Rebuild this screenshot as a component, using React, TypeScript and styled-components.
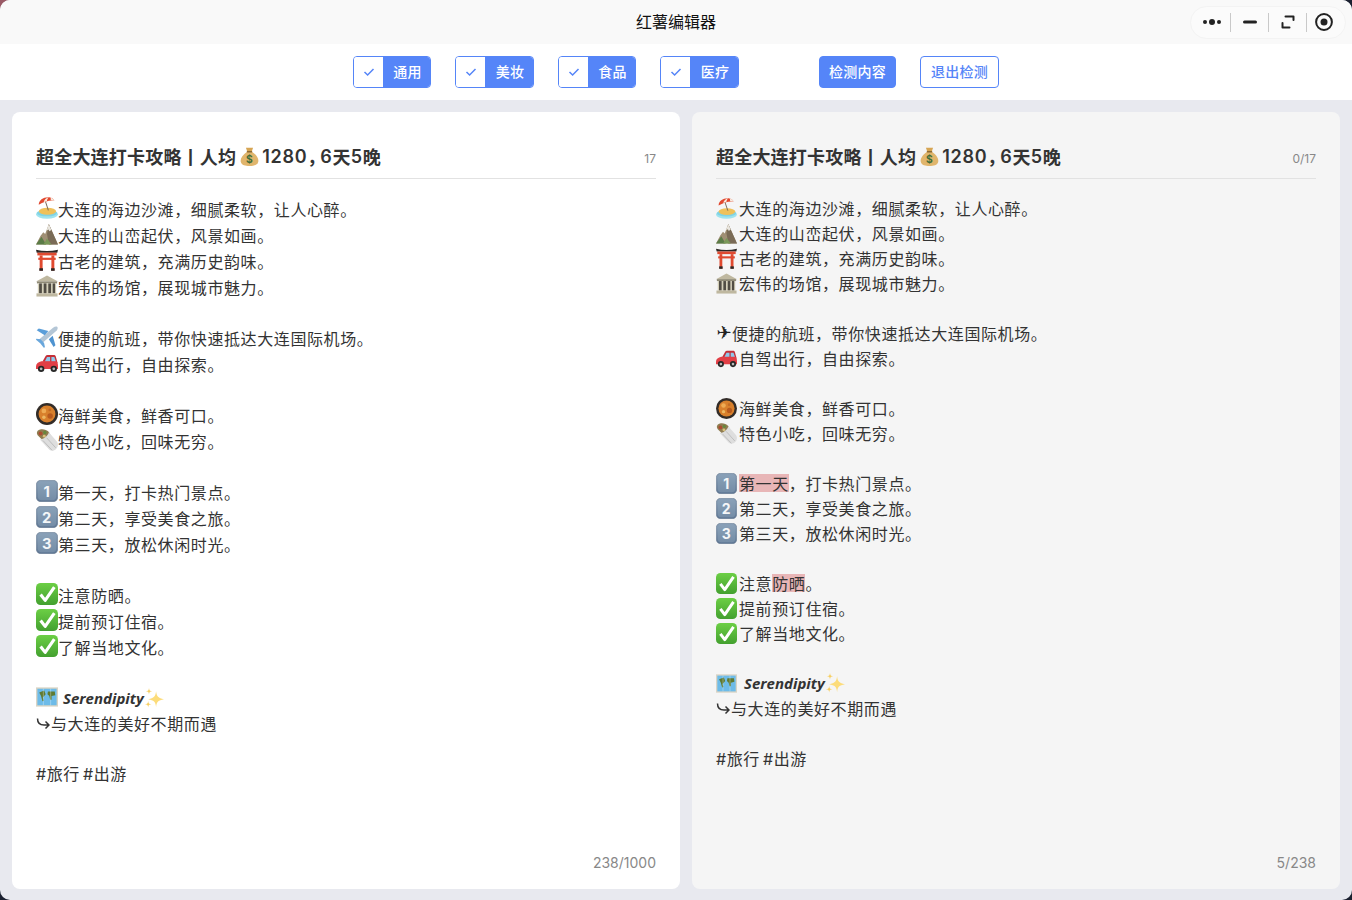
import React from "react";
import styled, { createGlobalStyle } from "styled-components";

const FONT = `Inter, "Noto Sans CJK SC", sans-serif`;
const BLUE = "#5585f8";

const GlobalStyle = createGlobalStyle`
  html, body {
    margin: 0;
    padding: 0;
    background: linear-gradient(#9a5a66, #9a5a66) 0 0 / 20px 20px no-repeat, #1b2130;
    font-family: ${FONT};
  }
`;

const Page = styled.div`
  width: 100%;
  height: 900px;
  display: flex;
  flex-direction: column;
  background: #e8e9ef;
  border-radius: 10px;
  overflow: hidden;
`;

const TitleBar = styled.header`
  height: 44px;
  flex: none;
  display: grid;
  grid-template-columns: 1fr auto 1fr;
  align-items: center;
  background: #f9f9f9;
`;

const AppName = styled.div`
  grid-column: 2;
  font-size: 16px;
  line-height: 20px;
  padding-bottom: 1px;
  color: #111;
`;

const Controls = styled.div`
  grid-column: 3;
  justify-self: end;
  width: 156px;
  height: 33px;
  margin-right: 6px;
  box-sizing: border-box;
  display: flex;
  align-items: center;
  border: 1px solid #f3f3f3;
  border-radius: 17px;
  background: #fbfbfb;
  padding-left: 2px;
`;

const ControlIcon = styled.div<{ $last?: boolean }>`
  width: ${({ $last }) => ($last ? 34 : 38)}px;
  height: 19px;
  box-sizing: border-box;
  display: flex;
  align-items: center;
  justify-content: center;
  border-right: ${({ $last }) => ($last ? "none" : "1px solid #c9c9c9")};
`;

const Toolbar = styled.div`
  height: 56px;
  flex: none;
  display: flex;
  align-items: center;
  justify-content: center;
  background: #fff;
`;

const Category = styled.label`
  width: 78px;
  height: 32px;
  display: flex;
  box-sizing: border-box;
  margin-right: 24px;
  border: 1px solid ${BLUE};
  border-radius: 4px;
  overflow: hidden;
  &:nth-of-type(even) {
    width: 79px;
  }
  &:nth-of-type(4) {
    margin-right: 80px;
  }
`;

const CheckBox = styled.span`
  width: 29px;
  flex: none;
  display: flex;
  align-items: center;
  justify-content: center;
  background: #fff;
`;

const CategoryName = styled.span`
  flex: 1;
  display: flex;
  align-items: center;
  justify-content: center;
  padding: 0 0 2px 2px;
  font-size: 14px;
  font-weight: 500;
  letter-spacing: 0.2px;
  color: #fff;
  background: ${BLUE};
`;

const ActionButton = styled.button<{ $outline?: boolean }>`
  width: ${({ $outline }) => ($outline ? 79 : 77)}px;
  height: 32px;
  padding: 0 0 2px;
  margin: 0;
  margin-right: ${({ $outline }) => ($outline ? "0" : "24px")};
  box-sizing: border-box;
  border: 1px solid ${BLUE};
  border-radius: 4px;
  font: 500 14px ${FONT};
  letter-spacing: 0.2px;
  color: ${({ $outline }) => ($outline ? BLUE : "#fff")};
  background: ${({ $outline }) => ($outline ? "#fff" : BLUE)};
`;

const Panels = styled.main`
  flex: 1;
  min-height: 0;
  display: flex;
  gap: 12px;
  padding: 12px 12px 11px;
`;

const Panel = styled.section<{ $muted?: boolean }>`
  width: ${({ $muted }) => ($muted ? 648 : 668)}px;
  flex: none;
  display: flex;
  flex-direction: column;
  box-sizing: border-box;
  padding: 24px 24px 16px;
  border-radius: 8px;
  background: ${({ $muted }) => ($muted ? "#f5f5f5" : "#fff")};
  color: #333;
`;

const PanelHead = styled.div`
  height: 43px;
  flex: none;
  box-sizing: border-box;
  display: flex;
  align-items: center;
  justify-content: space-between;
  border-bottom: 1px solid #e2e2e2;
`;

const Title = styled.div`
  display: flex;
  align-items: center;
  padding-bottom: 2px;
  font-size: 18px;
  font-weight: 600;
  letter-spacing: 0.2px;
  white-space: pre;
`;

const TitleBag = styled.span`
  display: flex;
  margin: 0 3px 0 4px;
`;

const TitleDigits = styled.span`
  font-weight: 600;
  letter-spacing: 0.7px;
`;

const TitleComma = styled.span`
  letter-spacing: -5px;
`;

const SmallCount = styled.div`
  padding-top: 2px;
  font-size: 12px;
  color: #888;
`;

const Body = styled.div<{ $muted?: boolean }>`
  flex: 1;
  padding-top: ${({ $muted }) => ($muted ? 16 : 17)}px;
  font-size: 16px;
  letter-spacing: 0.6px;
  white-space: pre;
`;

const Line = styled.div<{ $tall?: boolean }>`
  height: ${({ $tall }) => ($tall ? 26 : 25)}px;
  display: flex;
  align-items: center;
`;

const Tags = styled(Line)`
  word-spacing: -2px;
`;

const EmojiSlot = styled.span<{ $muted?: boolean }>`
  display: flex;
  flex: none;
  margin: ${({ $muted }) => ($muted ? "2px 2px 0 0" : "0 0 2px 0")};
`;

const Mark = styled.span`
  background: #e8b6b7;
  height: 18px;
  display: flex;
  align-items: center;
`;

const Fancy = styled.span`
  font-family: "Open Sans", sans-serif;
  font-style: italic;
  font-weight: 700;
  font-size: 15px;
  letter-spacing: 0;
  margin-left: 5px;
`;

const PlaneGlyph = styled.span`
  width: 16px;
  display: flex;
  justify-content: center;
  font-family: "DejaVu Sans", sans-serif;
  font-size: 18px;
  letter-spacing: 0;
  color: #222;
`;

const ArrowSvg = styled.svg`
  flex: none;
  margin-right: 1px;
`;

const Footer = styled.div`
  flex: none;
  text-align: right;
  font-size: 14px;
  line-height: 20px;
  color: #888;
`;

type EmojiName =
  | "bag" | "beach" | "mountain" | "torii" | "museum" | "plane" | "car"
  | "pan" | "wrap" | "one" | "two" | "three" | "check" | "map" | "sparkles";

const Keycap = ({ n }: { n: string }) => (
  <>
    <rect x="0.3" y="0.3" width="23.4" height="23.4" rx="5" fill="url(#keycap)" stroke="#64778e" strokeWidth="0.6" />
    <rect x="2" y="2" width="20" height="20" rx="4" fill="#8ba3bb" fillOpacity="0.45" />
    <text x="12" y="18" textAnchor="middle" fontSize="16" fontWeight="700" fontFamily="Inter, sans-serif" fill="#f4f6f8">{n}</text>
  </>
);

const glyphs: Record<EmojiName, React.ReactNode> = {
  bag: (
    <>
      <path d="M7.5 1 L16.5 1 L14.8 6 L9.2 6 Z" fill="#d6a553" />
      <path d="M9 6 L15 6 C21 10 24 15 23 19 C22 23 17 24 12 24 C7 24 2 23 1 19 C0 15 3 10 9 6 Z" fill="#e0b56c" />
      <rect x="8.5" y="5.2" width="7" height="1.6" rx="0.8" fill="#8d6a33" />
      <text x="12" y="20.5" textAnchor="middle" fontSize="13" fontWeight="700" fontFamily="Inter, sans-serif" fill="#3f6d38">$</text>
    </>
  ),
  beach: (
    <>
      <ellipse cx="12" cy="18.8" rx="12" ry="5" fill="#9fe3ee" />
      <ellipse cx="12" cy="17.5" rx="11" ry="3.6" fill="#5fc4de" fillOpacity="0.5" />
      <ellipse cx="12.5" cy="15.5" rx="9.5" ry="3.8" fill="#efc15a" />
      <path d="M10 4 L13.5 14.5" stroke="#7c6a58" strokeWidth="1.1" />
      <path d="M3 8.5 C3 3 9 -0.5 15.5 0.5 C18 1 19.5 2.5 20 4 C14 3.5 8 5.5 3 8.5 Z" fill="#e2482f" />
      <path d="M8.3 5.8 C9 3 11 1 14 0.4 C12.7 1.5 12 3 12 4.3 Z" fill="#f7ebdf" />
      <path d="M16 3.6 C16.2 2.4 16.2 1.5 15.6 0.6 C17.7 1 19.4 2.4 20 4 Z" fill="#f7ebdf" />
    </>
  ),
  mountain: (
    <>
      <path d="M0 23.5 L5 14 L8 10 L10 12 L14 1 L24 23.5 Z" fill="#a08f74" />
      <path d="M14 1 L24 23.5 L14 23.5 L12 12 Z" fill="#7a6b56" />
      <path d="M14 1 L16.8 7.5 L14.6 9 L13.6 7 L11.5 8.2 Z" fill="#e9e6df" />
      <path d="M0 23.5 L6 15 L11 23.5 Z" fill="#5b7c47" />
      <path d="M8 23.5 L12 17 L17 23.5 Z" fill="#7a9858" />
    </>
  ),
  torii: (
    <>
      <path d="M0 0.8 C8 2.6 16 2.6 24 0.8 L23.2 4 L0.8 4 Z" fill="#2c2725" />
      <rect x="1.5" y="4" width="21" height="3" fill="#e04a30" />
      <rect x="2.5" y="9.5" width="19" height="2.4" fill="#e04a30" />
      <rect x="4" y="7" width="3.2" height="16.5" fill="#e04a30" />
      <rect x="16.8" y="7" width="3.2" height="16.5" fill="#e04a30" />
      <rect x="3.6" y="21" width="4" height="2.8" fill="#2c2725" />
      <rect x="16.4" y="21" width="4" height="2.8" fill="#2c2725" />
    </>
  ),
  museum: (
    <>
      <path d="M12 0.5 L24 7 L0 7 Z" fill="#bfb8a0" />
      <rect x="1" y="7" width="22" height="2.2" fill="#8f8a76" />
      <rect x="2" y="9.2" width="20" height="10.8" fill="#d5d0ba" />
      <rect x="3.4" y="9.2" width="3" height="10.8" fill="#514d44" />
      <rect x="8.4" y="9.2" width="3" height="10.8" fill="#514d44" />
      <rect x="13.4" y="9.2" width="3" height="10.8" fill="#514d44" />
      <rect x="18.2" y="9.2" width="2.6" height="10.8" fill="#514d44" />
      <rect x="0.5" y="20" width="23" height="3.5" fill="#bfb8a0" />
    </>
  ),
  plane: (
    <>
      <path d="M22.6 0.6 C24 1.2 24 3 22.6 4.8 L7 18.5 L3 15 L18.6 2 C20 0.9 21.4 0.3 22.6 0.6 Z" fill="#b4c6d6" />
      <path d="M13.5 5.5 L3 2.8 L0.8 4.5 L9.5 10 Z" fill="#5b9ed9" />
      <path d="M18.2 10.5 L21.2 21 L19.2 23 L14 14.5 Z" fill="#4f93d0" />
      <path d="M5 14.5 L0.3 13.8 L0 15 L4.6 18.8 L8.5 23.8 L9.8 23.3 L8.8 18.5 Z" fill="#6aa7dc" />
    </>
  ),
  car: (
    <>
      <path d="M7 10.5 L10.5 4.4 C11 3.6 11.6 3.2 12.6 3.2 L19.5 3.2 C20.6 3.2 21.2 3.8 21.6 4.8 L23.6 12 Z" fill="#c42f37" />
      <path d="M9.5 10.5 L12 5.4 L15.4 5.4 L15.4 10.5 Z M16.8 5.4 L20 5.4 L21.8 10.5 L16.8 10.5 Z" fill="#8fc8ea" />
      <path d="M0 15.5 C0 12.5 2.5 10.8 6 10 L22 10 C23.4 10.5 24 13 24 15.5 L24 18.5 L0 18.5 Z" fill="#e23f46" />
      <circle cx="5.6" cy="18.4" r="3.5" fill="#262626" />
      <circle cx="19.4" cy="18.4" r="3.5" fill="#262626" />
      <circle cx="5.6" cy="18.4" r="1.5" fill="#b8b8b8" />
      <circle cx="19.4" cy="18.4" r="1.5" fill="#b8b8b8" />
    </>
  ),
  pan: (
    <>
      <circle cx="12" cy="12" r="12" fill="#322c28" />
      <circle cx="12" cy="12" r="9.2" fill="#d8802c" />
      <circle cx="8.6" cy="8.6" r="2.6" fill="#eeab54" />
      <circle cx="15.4" cy="14.2" r="3" fill="#b85a1d" />
      <circle cx="8.6" cy="15.6" r="1.9" fill="#edb862" />
      <circle cx="15" cy="7.6" r="1.5" fill="#c16a24" />
    </>
  ),
  wrap: (
    <>
      <path d="M9 14 L2 7 C0 4.5 1 1.5 4.5 0.6 C8 -0.2 11.5 1 14 3.4 L16 7 Z" fill="#8e7c50" />
      <circle cx="5" cy="5" r="2.2" fill="#ad4c31" />
      <circle cx="9.6" cy="3.8" r="1.8" fill="#66883d" />
      <circle cx="9" cy="7.8" r="1.6" fill="#d9c27c" />
      <path d="M14 3.6 L23 14 C24.6 16.4 24 19.6 22 21.8 C19.8 24 16.6 24.4 14.6 22.6 L4.2 11.4 C8 11.4 13 8 14 3.6 Z" fill="#dedede" />
      <path d="M7.5 12.5 L17.5 23.2 M11.5 9.5 L21.5 20.5" stroke="#bababa" strokeWidth="1" />
    </>
  ),
  one: <Keycap n="1" />,
  two: <Keycap n="2" />,
  three: <Keycap n="3" />,
  check: (
    <>
      <rect x="0" y="0" width="24" height="24" rx="5" fill="url(#tick)" />
      <path d="M5 12.5 L10 19 L20 4.5" fill="none" stroke="#fff" strokeWidth="3.4" strokeLinejoin="round" />
    </>
  ),
  map: (
    <>
      <rect x="0" y="1.5" width="24" height="21" fill="#d9d4c5" />
      <rect x="1.5" y="3" width="21" height="18" fill="#6dbbe8" />
      <path d="M3.5 7 L9 5 L10.5 9 L7.5 12.5 L8.5 16 L7 16.5 L5.5 11 Z M13 6 L20.5 6 L21 10 L17 11 L17 15 L15.5 15 L14.5 11 L12.5 9 Z" fill="#5f7a32" />
      <path d="M8 3 L8 21 M16 3 L16 21" stroke="#fff" strokeOpacity="0.35" strokeWidth="1" />
    </>
  ),
  sparkles: (
    <>
      <path d="M14.5 4 C15.2 10.5 17 12.2 24 13.5 C17 14.8 15.2 16.5 14.5 23 C13.8 16.5 12 14.8 5 13.5 C12 12.2 13.8 10.5 14.5 4 Z" fill="#fcdc7a" />
      <path d="M6 0 C6.3 3 7 3.7 10 4 C7 4.3 6.3 5 6 8 C5.7 5 5 4.3 2 4 C5 3.7 5.7 3 6 0 Z" fill="#f6cf63" />
      <path d="M5 15.5 C5.3 18.5 6 19.2 9 19.5 C6 19.8 5.3 20.5 5 23.5 C4.7 20.5 4 19.8 1 19.5 C4 19.2 4.7 18.5 5 15.5 Z" fill="#f6cf63" />
    </>
  ),
};

const EmojiSvg = styled.svg`
  flex: none;
  display: block;
`;

const Emoji = ({ name, size }: { name: EmojiName; size: number }) => (
  <EmojiSvg width={size} height={size} viewBox="0 0 24 24" aria-hidden>
    {glyphs[name]}
  </EmojiSvg>
);

const SvgDefs = styled.svg`
  position: absolute;
  width: 0;
  height: 0;
`;

const Defs = () => (
  <SvgDefs aria-hidden>
    <defs>
      <linearGradient id="keycap" x1="0" y1="0" x2="0" y2="1">
        <stop offset="0" stopColor="#8aa1b8" />
        <stop offset="1" stopColor="#5f7794" />
      </linearGradient>
      <linearGradient id="tick" x1="0" y1="0" x2="0" y2="1">
        <stop offset="0" stopColor="#6ccf45" />
        <stop offset="1" stopColor="#43a02f" />
      </linearGradient>
    </defs>
  </SvgDefs>
);

const categories = ["通用", "美妆", "食品", "医疗"];

const Tick = () => (
  <svg width="12" height="10" viewBox="0 0 12 10" aria-hidden>
    <path d="M1.5 5 L4.6 8 L10.5 2" fill="none" stroke={BLUE} strokeWidth="1.5" />
  </svg>
);

const HookArrow = () => (
  <ArrowSvg width="14" height="14" viewBox="0 0 14 14" aria-hidden>
    <path d="M1.5 2.5 C1.5 7 4 9 8 9 L13 9 M9.5 5.5 L13 9 L9.5 12.5" fill="none" stroke="#333" strokeWidth="1.5" />
  </ArrowSvg>
);

const PanelContent = ({ checked }: { checked: boolean }) => {
  // the checked copy sits in a tighter box, emoji do not stretch its lines
  const icon = (name: EmojiName) => (
    <EmojiSlot $muted={checked}>
      <Emoji name={name} size={checked ? 21 : 22} />
    </EmojiSlot>
  );
  const row = (name: EmojiName, text: React.ReactNode) => (
    <Line $tall={!checked}>
      {icon(name)}
      {text}
    </Line>
  );
  return (
    <Body $muted={checked}>
      {row("beach", "大连的海边沙滩，细腻柔软，让人心醉。")}
      {row("mountain", "大连的山峦起伏，风景如画。")}
      {row("torii", "古老的建筑，充满历史韵味。")}
      {row("museum", "宏伟的场馆，展现城市魅力。")}
      <Line />
      {checked ? (
        <Line><PlaneGlyph>✈</PlaneGlyph>便捷的航班，带你快速抵达大连国际机场。</Line>
      ) : (
        row("plane", "便捷的航班，带你快速抵达大连国际机场。")
      )}
      {row("car", "自驾出行，自由探索。")}
      <Line />
      {row("pan", "海鲜美食，鲜香可口。")}
      {row("wrap", "特色小吃，回味无穷。")}
      <Line />
      {row("one", checked ? <><Mark>第一天</Mark>，打卡热门景点。</> : "第一天，打卡热门景点。")}
      {row("two", "第二天，享受美食之旅。")}
      {row("three", "第三天，放松休闲时光。")}
      <Line />
      {row("check", checked ? <>注意<Mark>防晒</Mark>。</> : "注意防晒。")}
      {row("check", "提前预订住宿。")}
      {row("check", "了解当地文化。")}
      <Line />
      <Line>{icon("map")}<Fancy>Serendipity</Fancy><Emoji name="sparkles" size={20} /></Line>
      <Line><HookArrow />与大连的美好不期而遇</Line>
      <Line />
      <Tags>#旅行 #出游</Tags>
    </Body>
  );
};

const EditorPanel = ({ checked, head, foot }: { checked: boolean; head: string; foot: string }) => (
  <Panel $muted={checked}>
    <PanelHead>
      <Title>
        超全大连打卡攻略丨人均
        <TitleBag><Emoji name="bag" size={19} /></TitleBag>
        <TitleDigits>1280</TitleDigits>
        <TitleComma>，</TitleComma>
        <TitleDigits>6</TitleDigits>天<TitleDigits>5</TitleDigits>晚
      </Title>
      <SmallCount>{head}</SmallCount>
    </PanelHead>
    <PanelContent checked={checked} />
    <Footer>{foot}</Footer>
  </Panel>
);

export default function App() {
  return (
    <Page>
      <GlobalStyle />
      <Defs />
      <TitleBar>
        <AppName>红薯编辑器</AppName>
        <Controls>
          <ControlIcon>
            <svg width="20" height="8" viewBox="0 0 20 8" aria-hidden>
              <circle cx="3" cy="4" r="2" fill="#222" />
              <circle cx="10" cy="4" r="3" fill="#222" />
              <circle cx="17" cy="4" r="2" fill="#222" />
            </svg>
          </ControlIcon>
          <ControlIcon>
            <svg width="14" height="4" viewBox="0 0 14 4" aria-hidden>
              <rect width="14" height="3" y="0.5" rx="1.5" fill="#222" />
            </svg>
          </ControlIcon>
          <ControlIcon>
            <svg width="14" height="14" viewBox="0 0 14 14" aria-hidden>
              <path d="M4.5 1.5 H12.5 V5 M1.5 8 V12.5 H8.5" fill="none" stroke="#222" strokeWidth="2" strokeLinecap="round" strokeLinejoin="round" />
            </svg>
          </ControlIcon>
          <ControlIcon $last>
            <svg width="18" height="18" viewBox="0 0 18 18" aria-hidden>
              <circle cx="9" cy="9" r="7.9" fill="none" stroke="#222" strokeWidth="2" />
              <circle cx="9" cy="9" r="3.5" fill="#222" />
            </svg>
          </ControlIcon>
        </Controls>
      </TitleBar>
      <Toolbar>
        {categories.map((name) => (
          <Category key={name}>
            <CheckBox><Tick /></CheckBox>
            <CategoryName>{name}</CategoryName>
          </Category>
        ))}
        <ActionButton>检测内容</ActionButton>
        <ActionButton $outline>退出检测</ActionButton>
      </Toolbar>
      <Panels>
        <EditorPanel checked={false} head="17" foot="238/1000" />
        <EditorPanel checked head="0/17" foot="5/238" />
      </Panels>
    </Page>
  );
}
